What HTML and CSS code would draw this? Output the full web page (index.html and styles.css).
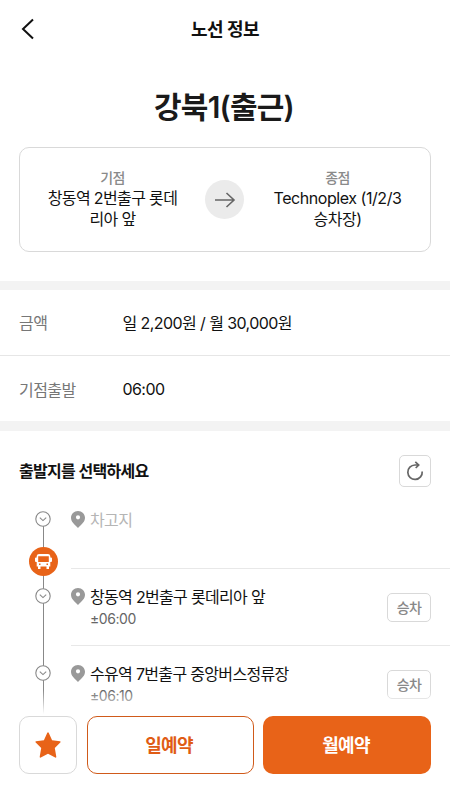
FILE: index.html
```html
<!DOCTYPE html>
<html lang="ko">
<head>
<meta charset="utf-8">
<title>노선 정보</title>
<link rel="stylesheet" href="styles.css">
</head>
<body>
<svg class="defs" width="0" height="0">
  <symbol id="pin" viewBox="0 0 14 17"><path fill-rule="evenodd" d="M7 0C3 0 0 3 0 6.800C0 10.500 3 13.300 7 17C11 13.300 14 10.500 14 6.800C14 3 11 0 7 0ZM7 4.200A2.100 2.100 0 1 1 7 8.400A2.100 2.100 0 0 1 7 4.200Z"/></symbol>
  <symbol id="node" viewBox="0 0 16 16"><circle cx="8" cy="8" r="7.200"/><path d="M4.800 6.700L8 9.600L11.200 6.700"/></symbol>
</svg>
<div class="screen">
  <header class="topbar">
    <svg class="back" viewBox="0 0 14 22"><path d="M12 1.500L2 11L12 20.500"/></svg>
    <h1>노선 정보</h1>
  </header>
  <section class="summary">
    <h2>강북1(출근)</h2>
    <div class="route">
      <div class="end"><span class="tag">기점</span><p>창동역 2번출구 롯데<br>리아 앞</p></div>
      <div class="arrow"><svg viewBox="0 0 22 18"><path d="M1 9H20M12.500 2L20 9L12.500 16"/></svg></div>
      <div class="end"><span class="tag">종점</span><p class="dest">Technoplex (1/2/3<br>승차장)</p></div>
    </div>
  </section>
  <dl class="info">
    <div class="row"><dt>금액</dt><dd>일 2,200원 / 월 30,000원</dd></div>
    <div class="row"><dt>기점출발</dt><dd>06:00</dd></div>
  </dl>
  <section class="stops">
    <div class="stops-head">
      <h3>출발지를 선택하세요</h3>
      <button class="refresh" aria-label="새로고침"><svg viewBox="0 0 18 20"><path d="M16.200 10.500A7.200 7.200 0 1 1 9 4H12.500M9.300 0.800L12.700 4L9.700 7"/></svg></button>
    </div>
    <ul class="list">
      <li class="depot">
        <div class="rail"><svg class="node"><use href="#node"/></svg></div>
        <div class="bus"><svg viewBox="0 0 17 15"><path fill-rule="evenodd" d="M4 0H13Q15 0 15.300 2V3.500H16Q17 3.500 17 4.500V7Q17 8 16 8H15.300V12.500H14V15H11.500V12.500H5.500V15H3V12.500H1.700V8H1Q0 8 0 7V4.500Q0 3.500 1 3.500H1.700V2Q2 0 4 0ZM3.200 2.200V8H13.800V2.200ZM4 9.600V11H5.500V9.600ZM11.500 9.600V11H13V9.600Z"/></svg></div>
        <div class="stop"><svg class="pin"><use href="#pin"/></svg><div class="place"><p class="name">차고지</p></div></div>
      </li>
      <li>
        <div class="rail"><svg class="node"><use href="#node"/></svg></div>
        <div class="stop"><svg class="pin"><use href="#pin"/></svg><div class="place"><p class="name">창동역 2번출구 롯데리아 앞</p><p class="time">±06:00</p></div><button class="board">승차</button></div>
      </li>
      <li>
        <div class="rail"><svg class="node"><use href="#node"/></svg></div>
        <div class="stop"><svg class="pin"><use href="#pin"/></svg><div class="place"><p class="name">수유역 7번출구 중앙버스정류장</p><p class="time">±06:10</p></div><button class="board">승차</button></div>
      </li>
    </ul>
  </section>
  <footer class="actions">
    <button class="star" aria-label="즐겨찾기"><svg viewBox="0 0 26 26"><path d="M12.300 0.800Q13 -0.200 13.700 0.800L17.100 8.200L25 9.300Q26 9.700 25.300 10.500L19.800 16L21.300 24.700Q21.300 26 20.200 25.500L13 21.800L5.800 25.500Q4.700 26 4.700 24.700L6.200 16L0.700 10.500Q0 9.700 1 9.300L8.900 8.200Z"/></svg></button>
    <button class="day">일예약</button>
    <button class="month">월예약</button>
  </footer>
</div>
</body>
</html>
```

FILE: styles.css
```css
* { box-sizing: border-box; margin: 0; padding: 0; }
body { background: #fff; }
.defs { position: absolute; }
.screen {
  position: relative; width: 450px; height: 800px; overflow: hidden;
  background: #fff; color: #111;
  font-family: Inter, "Noto Sans CJK KR", sans-serif;
  font-size: 16px; font-weight: 370; letter-spacing: -0.58px;
}
button { background: #fff; font: inherit; letter-spacing: inherit; display: flex; align-items: center; justify-content: center; }
svg { display: block; flex: none; }

.topbar { height: 58px; display: grid; grid-template-columns: 60px 1fr 60px; align-items: center; }
.back { width: 14px; height: 22px; margin-left: 21px; fill: none; stroke: #111; stroke-width: 2; }
h1 { font-size: 18px; font-weight: 600; line-height: 26px; text-align: center; letter-spacing: -0.6px; padding-top: 1px; }

.summary { height: 223px; padding: 29px 19px 0; }
h2 { font-size: 30px; font-weight: 600; line-height: 40px; text-align: center; letter-spacing: -0.8px; color: #1a1a1a; padding-right: 2px; }
.route { margin-top: 20px; height: 105px; border: 1px solid #d9d9d9; border-radius: 10px; display: grid; grid-template-columns: 1fr 40px 1fr; align-items: center; }
.end { text-align: center; line-height: 21px; padding-bottom: 2px; }
.end:first-child { letter-spacing: -0.64px; }
.tag { display: block; font-size: 14px; line-height: 20px; color: #8a8a8a; font-weight: 500; }
.dest { letter-spacing: -0.45px; }
.arrow { width: 39px; height: 39px; border-radius: 50%; background: #ebebeb; display: flex; align-items: center; justify-content: center; }
.arrow svg { width: 22px; height: 18px; fill: none; stroke: #666; stroke-width: 1.6; }

.info { border-top: 9px solid #f3f3f3; border-bottom: 10px solid #f3f3f3; }
.row { height: 65px; padding: 0 19px 1px; display: flex; align-items: center; }
.row + .row { height: 66px; padding-bottom: 0; border-top: 1px solid #e6e6e6; }
dt { width: 103.500px; color: #777; }

.stops-head { height: 79px; padding: 0 19px; display: flex; align-items: center; justify-content: space-between; }
h3 { font-size: 16px; font-weight: 600; letter-spacing: -0.7px; padding-bottom: 2px; }
.refresh { width: 32px; height: 32px; border: 1px solid #d9d9d9; border-radius: 5px; }
.refresh svg { width: 18px; height: 20px; fill: none; stroke: #666; stroke-width: 1.7; }

.list { list-style: none; padding-top: 1px; }
.list li { position: relative; height: 77px; display: grid; grid-template-columns: 71px 1fr; }
.list .depot { height: 58px; }
.rail { position: relative; padding: 19px 0 0 35px; }
.rail::before { content: ""; position: absolute; left: 43px; top: 0; bottom: 0; width: 1px; background: #888; }
.depot .rail { padding-top: 0; }
.depot .rail::before { top: 10px; }
.node { position: relative; width: 16px; height: 16px; fill: #fff; stroke: #888; stroke-width: 1.1; }
.bus { position: absolute; left: 28.500px; top: 36px; width: 29px; height: 29px; border-radius: 50%; background: #e86318; display: flex; align-items: center; justify-content: center; z-index: 1; }
.bus svg { width: 17px; height: 15px; fill: #fff; }
.stop { display: flex; padding: 19px 19px 0 0; border-bottom: 1px solid #e8e8e8; }
.depot .stop { padding-top: 0; }
.pin { width: 14px; height: 17px; margin-right: 5px; fill: #999; }
.place { flex: 1; }
.name { line-height: 22px; margin-top: -2px; letter-spacing: -0.68px; }
.depot .name { color: #b5b5b5; letter-spacing: -0.6px; }
.time { margin-top: 1px; font-size: 14px; line-height: 20px; color: #666; letter-spacing: -0.45px; }
.board { width: 44px; height: 29px; margin-top: 5px; padding-bottom: 2px; border: 1px solid #d9d9d9; border-radius: 5px; color: #888; font-size: 14px; font-weight: 500; }

.actions {
  position: absolute; left: 0; right: 0; bottom: 0; height: 110px; padding: 26px 19px 0;
  display: grid; grid-template-columns: 58px 167px 168px; column-gap: 9.500px; align-items: start;
  background: linear-gradient(rgba(255,255,255,0), #fff 24px); z-index: 2;
}
.actions button { height: 58px; border-radius: 10px; font-size: 18px; font-weight: 600; letter-spacing: -0.8px; padding: 0 2px 2px 0; }
.actions .star { border: 1px solid #d9d9d9; padding: 0; }
.star svg { width: 26px; height: 26px; fill: #e86318; }
.actions .day { border: 1px solid #d05a1a; color: #e05c14; }
.actions .month { border: 0; background: #e86318; color: #fff; }
```
